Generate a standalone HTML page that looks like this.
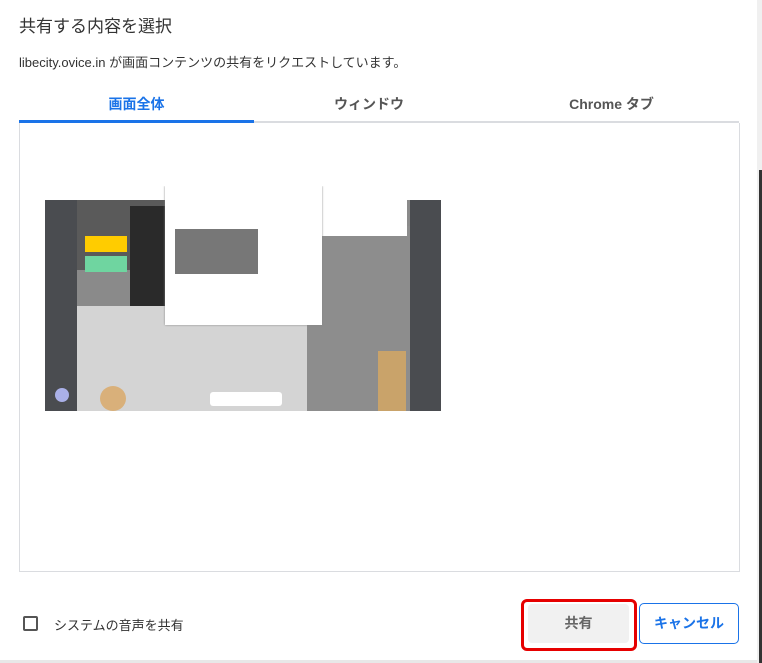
<!DOCTYPE html><html><head><meta charset="utf-8"><style>
body{margin:0;width:762px;height:663px;background:#e8e8e8;font-family:"Liberation Sans","Noto Sans CJK JP",sans-serif;position:relative;overflow:hidden}
.dlg{position:absolute;left:0;top:0;width:757px;height:660px;background:#fff}
.a{position:absolute}
</style></head><body>
<div class="a" style="left:757px;top:0;width:5px;height:663px;background:#f0f0f0"></div>
<div class="a" style="left:759px;top:170px;width:3px;height:493px;background:#333"></div>
<div class="dlg">
<div class="a" style="left:19px;top:12px;font-size:17px;color:#333">共有する内容を選択</div>
<div class="a" style="left:19px;top:52px;font-size:13px;color:#333">libecity.ovice.in が画面コンテンツの共有をリクエストしています。</div>
<div class="a" style="left:19px;top:94px;width:235px;text-align:center;font-size:14px;font-weight:bold;color:#1a73e8">画面全体</div>
<div class="a" style="left:254px;top:94px;width:230px;text-align:center;font-size:14px;font-weight:bold;color:#555">ウィンドウ</div>
<div class="a" style="left:484px;top:94px;width:255px;text-align:center;font-size:14px;font-weight:bold;color:#555">Chrome タブ</div>
<div class="a" style="left:19px;top:121px;width:720px;height:2px;background:#dadce0"></div>
<div class="a" style="left:19px;top:120px;width:235px;height:3px;background:#1a73e8"></div>
<div class="a" style="left:19px;top:123px;width:719px;height:448px;border:1px solid #dadce0;border-top:none"></div>
<!-- thumbnail -->
<div class="a" style="left:45px;top:186px;width:396px;height:225px;background:#8a8a8a;overflow:hidden">
 <div class="a" style="left:0;top:0;width:396px;height:14px;background:#fff"></div>
 <div class="a" style="left:0;top:14px;width:32px;height:211px;background:#4a4c50"></div>
 <div class="a" style="left:365px;top:14px;width:31px;height:211px;background:#4a4c50"></div>
 <div class="a" style="left:32px;top:14px;width:90px;height:70px;background:#5a5a5a"></div>
 <div class="a" style="left:40px;top:50px;width:42px;height:16px;background:#ffcc00"></div>
 <div class="a" style="left:40px;top:70px;width:42px;height:16px;background:#6fd5a0"></div>
 <div class="a" style="left:85px;top:20px;width:38px;height:110px;background:#2a2a2a"></div>
 <div class="a" style="left:32px;top:120px;width:230px;height:105px;background:#d4d4d4"></div>
 <div class="a" style="left:262px;top:40px;width:103px;height:185px;background:#8d8d8d"></div>
 <div class="a" style="left:260px;top:14px;width:102px;height:36px;background:#fff"></div>
 <div class="a" style="left:333px;top:165px;width:28px;height:60px;background:#c9a36a"></div>
 <div class="a" style="left:55px;top:200px;width:26px;height:25px;border-radius:50%;background:#d9b07a"></div>
 <div class="a" style="left:165px;top:206px;width:72px;height:14px;background:#fff;border-radius:3px"></div>
 <div class="a" style="left:120px;top:0;width:157px;height:139px;background:#fff;box-shadow:0 0 2px #888"></div>
 <div class="a" style="left:130px;top:43px;width:83px;height:45px;background:#777"></div>
 <div class="a" style="left:10px;top:202px;width:14px;height:14px;border-radius:50%;background:#aab0e8"></div>
</div>
<div class="a" style="left:23px;top:616px;width:11px;height:11px;border:2px solid #555;border-radius:2px"></div>
<div class="a" style="left:54px;top:615px;font-size:13px;color:#333">システムの音声を共有</div>
<div class="a" style="left:521px;top:599px;width:110px;height:46px;border:3px solid #e60000;border-radius:6px"></div>
<div class="a" style="left:528px;top:604px;width:101px;height:39px;background:#f1f1f1;border-radius:4px;font-size:14px;font-weight:bold;color:#666;text-align:center;line-height:39px">共有</div>
<div class="a" style="left:639px;top:603px;width:98px;height:39px;border:1.5px solid #1a73e8;border-radius:5px;font-size:14px;font-weight:bold;color:#1a73e8;text-align:center;line-height:39px">キャンセル</div>
</div>
</body></html>
